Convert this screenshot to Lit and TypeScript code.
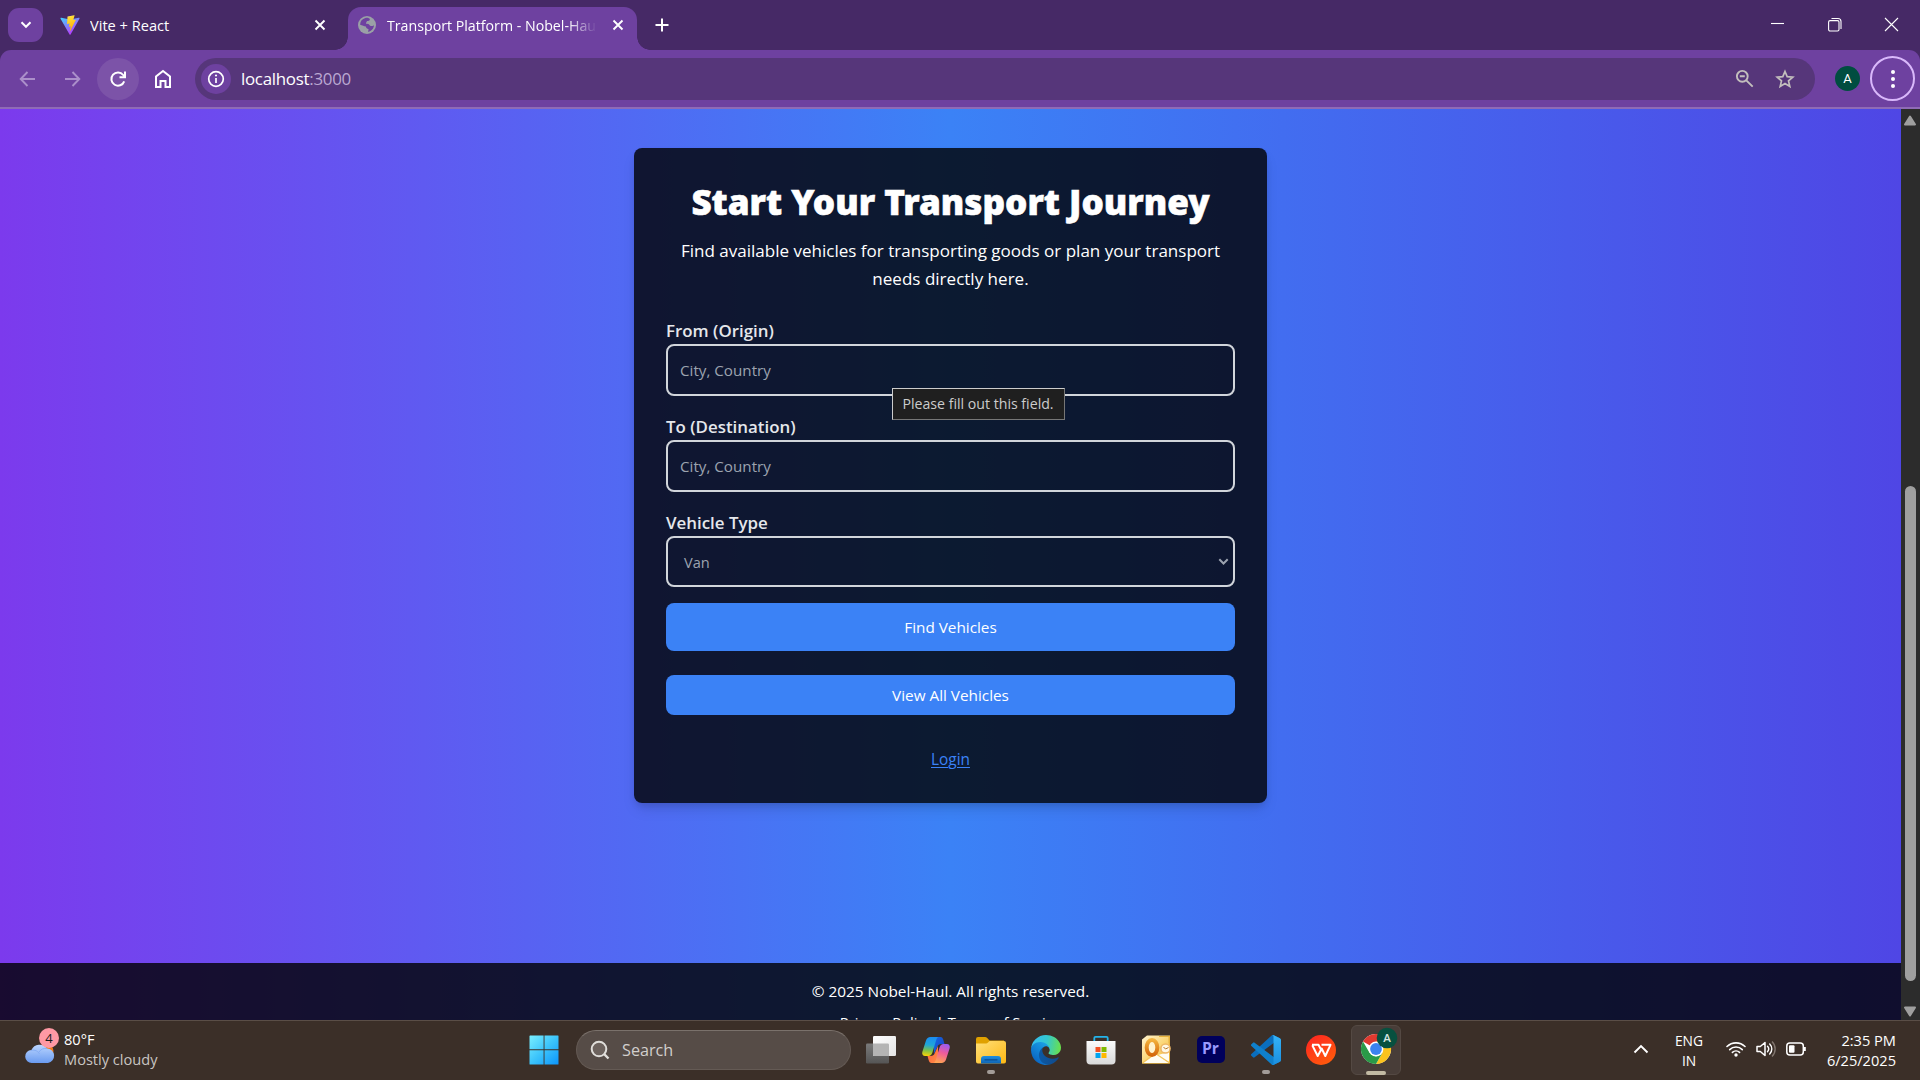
import { LitElement, html, css } from "lit";
import { customElement } from "lit/decorators.js";

const vite = html`<svg width="20" height="20" viewBox="0 0 32 32">
  <defs>
    <linearGradient id="va" x1="0" y1="0" x2=".6" y2="1"><stop offset="0" stop-color="#41d1ff"/><stop offset="1" stop-color="#bd34fe"/></linearGradient>
    <linearGradient id="vb" x1=".4" y1="0" x2=".6" y2="1"><stop offset="0" stop-color="#ffea83"/><stop offset=".1" stop-color="#ffdd35"/><stop offset="1" stop-color="#ffa800"/></linearGradient>
  </defs>
  <path fill="url(#va)" d="M31.1 6 16.9 31.3a.9.9 0 0 1-1.6 0L.9 6C.5 5.200 1.100 4.300 2 4.500L16.100 7l13.900-2.500c.9-.2 1.500.7 1.100 1.500z"/>
  <path fill="url(#vb)" d="M22.700.5 12.300 2.500c-.2 0-.3.2-.3.400l-.7 10.900c0 .3.2.5.500.4l2.900-.7c.3-.1.5.2.5.500l-.9 4.300c-.1.3.2.5.5.4l1.800-.5c.3-.1.6.2.500.5l-1.400 6.700c-.1.400.5.7.7.3l8.900-17.700c.1-.3-.1-.6-.4-.5l-3 .6c-.3 0-.5-.2-.5-.5l1.900-6.600c.1-.3-.1-.6-.6-.5z"/>
</svg>`;

const globe = html`<svg width="20" height="20" viewBox="0 0 20 20">
  <circle cx="10" cy="10" r="9" fill="#9aa0a6"/>
  <path fill="#6e41a0" d="M8.300 3c2.200-.6 4 .1 4.600 1.200-.2 1.500-1.500 1.600-2.900 1.800-.3 1.200-1.300 1.800-1 2.800 1.500.1 2.800.1 3.500 1.200.8 1.300 1.700 1.200 3.200.9l1.300-.6c-.2 3.300-2.600 6-5.700 6.600-.3-.8.2-1.600.3-2.700-1.500-.6-2.600-1.200-2.700-2.800-1.900-.1-3.500-1-5.800-1.700C3.200 6.200 5.200 3.900 8.300 3z"/>
</svg>`;

const tabClose = html`<svg width="12" height="12" viewBox="0 0 12 12"><path d="M1.500 1.500l9 9M10.500 1.500l-9 9" stroke="#fff" stroke-width="1.900"/></svg>`;

const startIcon = html`<svg width="30" height="30" viewBox="0 0 30 30">
  <defs><linearGradient id="ws" gradientUnits="userSpaceOnUse" x1="0" y1="0" x2="30" y2="30"><stop offset="0" stop-color="#7cf1ff"/><stop offset=".5" stop-color="#3cc4fb"/><stop offset="1" stop-color="#0a93fb"/></linearGradient></defs>
  <path fill="url(#ws)" d="M1 .5h13.600v13.700H.5V1zM15.500.5H29a.5.5 0 0 1 .5.5v13.200h-14zM.5 15.300h14.100V29.500H1a.5.500 0 0 1-.5-.5zM15.500 15.300h14V29a.5.500 0 0 1-.5.5H15.500z"/>
</svg>`;

const taskView = html`<svg width="32" height="30" viewBox="0 0 32 30">
  <defs>
    <linearGradient id="ta" x1="0" y1="0" x2="0" y2="1"><stop offset="0" stop-color="#7a7a7a"/><stop offset="1" stop-color="#555"/></linearGradient>
    <linearGradient id="tb" x1="0" y1="0" x2="1" y2="1"><stop offset="0" stop-color="#fff"/><stop offset="1" stop-color="#e4e4e4"/></linearGradient>
  </defs>
  <rect x="1" y="8.500" width="23" height="20" rx="1.200" fill="url(#ta)"/>
  <rect x="8" y="1" width="23" height="20" rx="1.200" fill="url(#tb)"/>
  <path d="M8 8.500h14.800a1.200 1.200 0 0 1 1.200 1.200V21H9.200A1.200 1.200 0 0 1 8 19.800z" fill="#b4b4b4"/>
</svg>`;

const copilot = html`<svg width="30" height="30" viewBox="0 0 30 30">
  <defs>
    <linearGradient id="ca" x1=".3" y1="0" x2=".2" y2="1"><stop offset="0" stop-color="#1b8df0"/><stop offset=".4" stop-color="#1fa6d8"/><stop offset=".7" stop-color="#7dc04a"/><stop offset="1" stop-color="#fcd203"/></linearGradient>
    <linearGradient id="cb" x1=".7" y1="0" x2=".4" y2="1"><stop offset="0" stop-color="#9a5cf2"/><stop offset=".45" stop-color="#ee5a9c"/><stop offset="1" stop-color="#ffa352"/></linearGradient>
    <linearGradient id="cc" x1="0" y1="0" x2="1" y2="1"><stop offset="0" stop-color="#1468e0"/><stop offset="1" stop-color="#1a3fc4"/></linearGradient>
    <linearGradient id="cd" x1="0" y1="0" x2="1" y2="1"><stop offset="0" stop-color="#ff5a36"/><stop offset="1" stop-color="#ff8f4a"/></linearGradient>
  </defs>
  <path fill="url(#cc)" d="M13 2h6.500c1.700 0 2.300 1.200 2.800 2.700L23.500 9h-3.200c-2 0-3.300.8-4 2.700L13 19z"/>
  <path fill="url(#cd)" d="M17 28H10.500c-1.700 0-2.300-1.200-2.800-2.700L6.500 21h3.200c2 0 3.300-.8 4-2.700L17 11z"/>
  <path fill="url(#ca)" d="M9.500 2h8.300c-1.400.3-2.100 1.400-2.600 3l-3.700 12.300c-.7 2.400-2 3.700-4 3.700H4.200C1.800 21 .8 19.200 1.300 17L5 5.500C5.700 3.200 7.300 2 9.500 2z"/>
  <path fill="url(#cb)" d="M20.500 28h-8.300c1.400-.3 2.100-1.400 2.600-3l3.700-12.300c.7-2.400 2-3.700 4-3.700h3.300c2.400 0 3.400 1.800 2.900 4L25 24.500c-.7 2.300-2.300 3.500-4.500 3.500z"/>
</svg>`;

const explorer = html`<svg width="30" height="30" viewBox="0 0 30 30">
  <defs>
    <linearGradient id="ea" x1="0" y1="0" x2="1" y2="1"><stop offset="0" stop-color="#ffe07a"/><stop offset="1" stop-color="#fdb813"/></linearGradient>
    <linearGradient id="eb" x1="0" y1="0" x2="0" y2="1"><stop offset="0" stop-color="#1f8fe0"/><stop offset="1" stop-color="#0f64b4"/></linearGradient>
  </defs>
  <path fill="#e0a100" d="M0 4a2 2 0 0 1 2-2h7c1 0 1.600.3 2.200.9L13.500 5.500H28V12H0z"/>
  <path fill="url(#ea)" d="M0 8.500h9.500c1.200 0 1.800-.3 2.500-1l1-1c.4-.4.900-.5 1.500-.5H28a2 2 0 0 1 2 2V26.500a2 2 0 0 1-2 2H2a2 2 0 0 1-2-2z"/>
  <path fill="url(#eb)" d="M5 28.500V24a3 3 0 0 1 3-3h14a3 3 0 0 1 3 3v4.500z"/>
  <path d="M9 24.800h12" stroke="#0a4d92" stroke-width="1.300" stroke-linecap="round"/>
</svg>`;

const edge = html`<svg width="30" height="30" viewBox="0 0 256 256">
  <defs>
    <linearGradient id="ga" gradientUnits="userSpaceOnUse" x1="60" y1="177" x2="241" y2="177"><stop offset="0" stop-color="#0c59a4"/><stop offset="1" stop-color="#114a8b"/></linearGradient>
    <linearGradient id="gb" gradientUnits="userSpaceOnUse" x1="150" y1="100" x2="40" y2="230"><stop offset="0" stop-color="#1b9de2"/><stop offset=".4" stop-color="#1387d8"/><stop offset="1" stop-color="#0a66c2"/></linearGradient>
    <linearGradient id="gc" gradientUnits="userSpaceOnUse" x1="10" y1="70" x2="250" y2="110"><stop offset="0" stop-color="#33bdf0"/><stop offset=".5" stop-color="#34c7cf"/><stop offset="1" stop-color="#68e04e"/></linearGradient>
  </defs>
  <path fill="url(#ga)" d="M231 190.500a93 93 0 0 1-10.500 4.700 102 102 0 0 1-36 6.500c-47.300 0-88.500-32.500-88.500-74.300a31.500 31.500 0 0 1 16.400-27.300c-42.800 1.800-53.800 46.400-53.800 72.500 0 74 68.100 81.400 82.800 81.400 7.900 0 19.800-2.300 27-4.600l1.300-.4a128 128 0 0 0 66.600-52.800 4 4 0 0 0-5.300-5.700z"/>
  <path fill="url(#gb)" d="M105.700 241.400a79 79 0 0 1-22.700-21.300 80.700 80.700 0 0 1 29.500-120c3.100-1.500 8.500-4.100 15.600-4 10 .1 19.600 4.900 25.700 13a32 32 0 0 1 6.300 18.700c0-.2 24.500-79.600-80-79.600C36.200 48.200.1 89.900.1 126.500a130 130 0 0 0 12.100 56 128 128 0 0 0 156.400 67 75.500 75.500 0 0 1-62.800-8z"/>
  <path fill="url(#gc)" d="M152.300 148.900c-.8 1-3.300 2.500-3.300 5.700 0 2.600 1.700 5.100 4.700 7.200 14.400 10 41.500 8.700 41.600 8.700 10.700 0 21.100-2.900 30.300-8.300A61.400 61.400 0 0 0 256 109.200c.3-22.400-8-37.300-11.300-43.900C223.500 23.900 177.700 0 128 0A128 128 0 0 0 0 126.200c.5-36.500 36.800-66 80-66 3.500 0 23.500.3 42 10 16.300 8.600 24.900 19 30.800 29.200 6.200 10.700 7.300 24.100 7.300 29.500s-2.700 13.300-7.800 20z"/>
</svg>`;

const store = html`<svg width="30" height="30" viewBox="0 0 30 30">
  <defs><linearGradient id="sa" x1="0" y1="0" x2="0" y2="1"><stop offset="0" stop-color="#fbfbfb"/><stop offset="1" stop-color="#d9d9d9"/></linearGradient></defs>
  <path d="M8.300 7V3a1.200 1.200 0 0 1 1.200-1.200h11A1.200 1.200 0 0 1 21.700 3v4" fill="none" stroke="#24b4ea" stroke-width="1.800"/>
  <path fill="url(#sa)" d="M.5 6h29v19.500a4 4 0 0 1-4 4h-21a4 4 0 0 1-4-4z"/>
  <path fill="#f25022" d="M9.500 12h5v5h-5z"/><path fill="#7fba00" d="M15.500 12h5v5h-5z"/><path fill="#00a4ef" d="M9.500 18h5v5h-5z"/><path fill="#ffb900" d="M15.500 18h5v5h-5z"/>
</svg>`;

const outlook = html`<svg width="30" height="30" viewBox="0 0 30 30">
  <defs>
    <linearGradient id="oa" x1="0" y1="0" x2="1" y2="1"><stop offset="0" stop-color="#fff4cf"/><stop offset=".5" stop-color="#fbd779"/><stop offset="1" stop-color="#f0b132"/></linearGradient>
    <linearGradient id="ob" x1="0" y1="0" x2="0" y2="1"><stop offset="0" stop-color="#f3b23c"/><stop offset="1" stop-color="#d4680c"/></linearGradient>
  </defs>
  <path fill="url(#oa)" d="M1 4.500 6 .5h23v28H1z"/>
  <path d="M18 1.500h10v7M28.500 1v27H1.500" fill="none" stroke="#e6b13c" stroke-width="1"/>
  <path fill="#fffdf4" d="M1.500 28 14 19l14.500 9z"/><path fill="#fffdf4" d="M15 20.500 28 17v10z"/>
  <path d="M1.500 28 14.500 18.500 28 27.500" fill="none" stroke="#f2c55e" stroke-width="1.200"/>
  <ellipse cx="11" cy="12.500" rx="5.300" ry="7.600" fill="#fff3cd" stroke="url(#ob)" stroke-width="4"/>
  <circle cx="24.500" cy="13.500" r="4.600" fill="#fff8e6" stroke="#eeb765" stroke-width="1.500"/>
  <path d="M24.500 14l-2-2M24.500 14l3-1.500" stroke="#b87828" stroke-width="1"/>
</svg>`;

const vscode = html`<svg width="30" height="30" viewBox="0 0 100 100">
  <defs><linearGradient id="vs" x1="0" y1="0" x2="0" y2="1"><stop offset="0" stop-color="#35b3f7"/><stop offset="1" stop-color="#1a8fe0"/></linearGradient></defs>
  <path fill="#0a6ebd" d="M96.500 10.600 75.900.7a6.200 6.200 0 0 0-7.100 1.200L1.300 63.100a4.200 4.200 0 0 0 0 6.200l5.500 5a4.200 4.200 0 0 0 5.300.2L93.400 13.200z"/>
  <path fill="#0f80cc" d="M96.500 89.400 75.900 99.300a6.200 6.200 0 0 1-7.100-1.200L1.300 36.900a4.200 4.200 0 0 1 0-6.200l5.500-5a4.200 4.200 0 0 1 5.300-.2L93.400 86.800z"/>
  <path fill="url(#vs)" d="M75.900 99.300a6.200 6.200 0 0 1-7.100-1.200c2.300 2.300 6.200.7 6.200-2.600V4.500c0-3.300-3.900-4.900-6.200-2.600A6.200 6.200 0 0 1 75.900.7l20.600 9.900a6.200 6.200 0 0 1 3.500 5.600v67.600a6.200 6.200 0 0 1-3.500 5.600z"/>
</svg>`;

const wps = html`<svg width="30" height="30" viewBox="0 0 30 30">
  <defs><linearGradient id="wa" x1="0" y1="0" x2=".7" y2="1"><stop offset="0" stop-color="#ff2222"/><stop offset="1" stop-color="#ff5a0c"/></linearGradient></defs>
  <circle cx="15" cy="15" r="15" fill="url(#wa)"/>
  <path d="M6 9.800h6.500l3.300 6.400M15.500 9.800h9L19.300 21 15.700 13.500 11.700 21 6.300 10.200" fill="none" stroke="#fff" stroke-width="2" stroke-linejoin="round"/>
</svg>`;

const chrome = html`<svg width="42" height="42" viewBox="0 0 42 42">
  <circle cx="16" cy="22" r="15" fill="#fff"/>
  <path fill="#e0392f" d="M16 22 3 14.500A15 15 0 0 1 29 14.500z"/>
  <path fill="#fcc31e" d="M16 22V14.500H29A15 15 0 0 1 16 37l6.500-11.300z"/>
  <path fill="#2a9a48" d="M16 37A15 15 0 0 1 3 14.500L9.500 25.700 16 29.500 22.400 25.800z"/>
  <circle cx="16" cy="22" r="7.400" fill="#fff"/><circle cx="16" cy="22" r="5.900" fill="#3b82f0"/>
  <circle cx="27" cy="11" r="10.300" fill="#07503f"/>
  <text x="27" y="15" font-size="11.500" font-weight="600" text-anchor="middle" fill="#d8e4e0">A</text>
</svg>`;

@customElement("browser-chrome")
class BrowserChrome extends LitElement {
  static styles = css`
    :host { display: block; background: #462966; color: #fff; font-family: "Open Sans", sans-serif; }
    svg { display: block; flex: none; }
    .tabs { display: flex; height: 50px; align-items: flex-start; }
    .search-tabs { width: 35px; height: 34px; margin: 8px 0 0 8px; border-radius: 11px; background: #6e41a0; display: grid; place-items: center; }
    .tab { display: flex; align-items: center; height: 43px; margin-top: 7px; font-size: 14.600px; padding-bottom: 7px; box-sizing: border-box; }
    .tab.idle { width: 305px; padding-left: 17px; padding-right: 22px; }
    .tab.active { width: 289px; background: #6e41a0; border-radius: 13px 13px 0 0; padding-left: 9px; padding-right: 13px; font-size: 14.200px; position: relative; }
    .tab.active::before, .tab.active::after { content: ""; position: absolute; bottom: 0; width: 13px; height: 13px; }
    .tab.active::before { left: -13px; background: radial-gradient(circle at 0 0, transparent 12.500px, #6e41a0 13px); }
    .tab.active::after { right: -13px; background: radial-gradient(circle at 100% 0, transparent 12.500px, #6e41a0 13px); }
    .title { flex: 1; margin-left: 10px; white-space: nowrap; overflow: hidden; line-height: 22px; }
    .active .title { margin-left: 10px; margin-right: 15px; padding-top: 1px; -webkit-mask-image: linear-gradient(90deg, #000 86%, transparent 100%); mask-image: linear-gradient(90deg, #000 86%, transparent 100%); }
    .new { margin: 18px 0 0 18px; }
    .win { margin-left: auto; display: flex; gap: 42.500px; padding: 17px 21px 0 0; }
    .bar { display: flex; align-items: center; height: 59px; box-sizing: border-box; padding: 0 5px 0 17px; background: #6e41a0; border-radius: 11px 11px 0 0; border-bottom: 2px solid #8f6bb6; }
    .fwd { margin-left: 25px; }
    .reload { width: 42px; height: 42px; border-radius: 50%; background: #7c53a8; display: grid; place-items: center; margin-left: 15px; }
    .home { margin-left: 15px; }
    .url { flex: 1; height: 42px; border-radius: 21px; background: #56367a; margin-left: 23px; display: flex; align-items: center; padding: 0 20px 0 6px; }
    .info { width: 30px; height: 30px; border-radius: 50%; background: #6e41a0; display: grid; place-items: center; }
    .addr { flex: 1; margin-left: 10px; font-size: 16.900px; letter-spacing: -.280px; line-height: 24px; padding-top: 1px; }
    .addr span { color: #bba8d2; }
    .star { margin-left: 21px; }
    .avatar { width: 25px; height: 25px; border-radius: 50%; background: #004d40; margin-left: 20px; font-size: 13px; line-height: 25px; text-align: center; font-family: Roboto, sans-serif; }
    .menu { width: 45px; height: 45px; box-sizing: border-box; border: 2.500px solid #d9b8fb; border-radius: 50%; margin-left: 10px; display: grid; place-items: center; }
  `;
  render() {
    return html`
      <div class="tabs">
        <div class="search-tabs"><svg width="12" height="8" viewBox="0 0 12 8"><path d="M1.500 1.200 6 5.800l4.500-4.600" fill="none" stroke="#fff" stroke-width="2"/></svg></div>
        <div class="tab idle">${vite}<div class="title">Vite + React</div>${tabClose}</div>
        <div class="tab active">${globe}<div class="title">Transport Platform - Nobel-Haul</div>${tabClose}</div>
        <svg class="new" width="14" height="14" viewBox="0 0 14 14"><path d="M7 .5v13M.5 7h13" stroke="#fff" stroke-width="2"/></svg>
        <div class="win">
          <svg width="15" height="15" viewBox="0 0 15 15"><path d="M1 6.500h13" stroke="#fff" stroke-width="1.100"/></svg>
          <svg width="14" height="15" viewBox="0 0 14 15"><path d="M3.500 1.500H10A3 3 0 0 1 13 4.500V12" fill="none" stroke="#fff" stroke-width="1.100"/><rect x=".6" y="3.600" width="10.400" height="10.400" rx="1.500" fill="none" stroke="#fff" stroke-width="1.100"/></svg>
          <svg width="15" height="15" viewBox="0 0 15 15"><path d="M1 1l13 13M14 1 1 14" stroke="#fff" stroke-width="1.100"/></svg>
        </div>
      </div>
      <div class="bar">
        <svg width="20" height="18" viewBox="0 0 20 18"><path d="M18 9H4.500M10.500 2 3.700 9l6.800 7" fill="none" stroke="#ab8fca" stroke-width="1.900"/></svg>
        <svg class="fwd" width="20" height="18" viewBox="0 0 20 18"><path d="M3 9h13.500M10.500 2l6.800 7-6.800 7" fill="none" stroke="#ab8fca" stroke-width="1.900"/></svg>
        <div class="reload"><svg width="18" height="18" viewBox="0 0 18 18"><path d="M15.200 11.300A6.600 6.600 0 1 1 14.200 5l1.400 1.800" fill="none" stroke="#fff" stroke-width="2"/><path d="M10.500 7.200H16V1.600" fill="none" stroke="#fff" stroke-width="2"/></svg></div>
        <svg class="home" width="18" height="20" viewBox="0 0 18 20"><path d="M2 18V7.500L9 2l7 5.500V18h-4.500v-6h-5v6z" fill="none" stroke="#fff" stroke-width="2"/></svg>
        <div class="url">
          <div class="info"><svg width="18" height="18" viewBox="0 0 18 18"><circle cx="9" cy="9" r="7.300" fill="none" stroke="#fff" stroke-width="1.700"/><path d="M9 8v5" stroke="#fff" stroke-width="1.700"/><circle cx="9" cy="5.500" r="1.100" fill="#fff"/></svg></div>
          <div class="addr">localhost<span>:3000</span></div>
          <svg width="19" height="19" viewBox="0 0 19 19"><circle cx="7.300" cy="7.300" r="5.400" fill="none" stroke="#c3bfbd" stroke-width="1.900"/><path d="M4.800 7.300h5M11.300 11.300l6.400 6.400" stroke="#c3bfbd" stroke-width="1.900"/></svg>
          <svg class="star" width="20" height="20" viewBox="0 0 20 20"><path d="M10 2.500 12.200 7.700 17.800 8.200 13.500 11.900 14.800 17.400 10 14.500 5.200 17.400 6.500 11.900 2.200 8.200 7.800 7.700z" fill="none" stroke="#c3bfbd" stroke-width="1.700"/></svg>
        </div>
        <div class="avatar">A</div>
        <div class="menu"><svg width="6" height="20" viewBox="0 0 6 20"><g fill="#fff"><circle cx="3" cy="3" r="2"/><circle cx="3" cy="10" r="2"/><circle cx="3" cy="17" r="2"/></g></svg></div>
      </div>`;
  }
}

@customElement("transport-page")
class TransportPage extends LitElement {
  static styles = css`
    :host { display: flex; height: 911px; overflow: hidden; color: #fff; font-family: "Open Sans", sans-serif; }
    .page { flex: 1; display: flex; flex-direction: column; align-items: center; background: linear-gradient(90deg, #7c3aed, #3b82f6 50%, #4f46e5); }
    .card { width: 633px; height: 655px; box-sizing: border-box; margin: 39px 0 160px; padding: 33px 32px 0; background: rgba(0, 0, 0, .8); border-radius: 8px; box-shadow: 0 4px 6px -1px rgba(0, 0, 0, .1), 0 8px 15px -3px rgba(0, 0, 0, .12); flex: none; }
    h1 { margin: 0; font: 900 35.100px/41px "Noto Sans", sans-serif; height: 40px; text-align: center; white-space: nowrap; -webkit-text-stroke: .6px #fff; }
    .lead { margin: 16px 0 23px; font-size: 17.050px; line-height: 28px; text-align: center; }
    .field { position: relative; margin-bottom: 16px; }
    label { display: block; font-size: 16.900px; font-weight: 600; line-height: 30px; height: 28px; color: #e5e7eb; }
    .input { height: 52px; box-sizing: border-box; border: 2px solid #d1d5db; border-radius: 8px; padding: 0 12px; font-size: 15.200px; line-height: 49px; color: #9ca3af; }
    .select { height: 51px; display: flex; align-items: center; justify-content: space-between; padding: 0 4px 0 16px; font-size: 14.600px; line-height: 48px; }
    .btn { height: 48px; border-radius: 8px; background: #3b82f6; text-align: center; font-size: 15.300px; line-height: 49px; }
    .all { height: 40px; margin-top: 24px; line-height: 40px; }
    .login { display: block; text-align: center; margin-top: 33px; font-size: 15.400px; line-height: 24px; color: #3b82f6; text-decoration: underline; text-underline-offset: 2px; text-decoration-thickness: 1px; }
    .tip { position: absolute; left: 226px; top: 72px; width: 173px; height: 32px; box-sizing: border-box; border: 1px solid #767676; border-top-color: #ccc; border-left-color: #ccc; background: #1f1f1f; color: #ccc; font-size: 14.150px; line-height: 29px; padding-right: 1px; text-align: center; z-index: 1; }
    .footer { align-self: stretch; flex: 1; background: rgba(0, 0, 0, .8); padding-top: 16px; text-align: center; font-size: 15.350px; line-height: 24px; }
    .links { margin-top: 8px; font-size: 14.750px; line-height: 23px; }
    .scroll { width: 19px; background: #2c2c2c; display: flex; flex-direction: column; align-items: center; box-sizing: border-box; padding: 6px 1px 3px 0; }
    .thumb { width: 11px; height: 495px; border-radius: 6px; background: #9f9f9f; margin: 360px 0 auto; }
  `;
  private field(label: string, tip = "") {
    return html`<div class="field"><label>${label}</label><div class="input">City, Country</div>${tip ? html`<div class="tip">${tip}</div>` : ""}</div>`;
  }
  render() {
    return html`
      <div class="page">
        <div class="card">
          <h1>Start Your Transport Journey</h1>
          <div class="lead">Find available vehicles for transporting goods or plan your transport needs directly here.</div>
          ${this.field("From (Origin)", "Please fill out this field.")}
          ${this.field("To (Destination)")}
          <div class="field"><label>Vehicle Type</label>
            <div class="input select">Van<svg width="11" height="8" viewBox="0 0 11 8"><path d="M1.300 1.300 5.500 5.500l4.200-4.200" fill="none" stroke="#9ca3af" stroke-width="2"/></svg></div>
          </div>
          <div class="btn">Find Vehicles</div>
          <div class="btn all">View All Vehicles</div>
          <a class="login">Login</a>
        </div>
        <div class="footer">
          <div>© 2025 Nobel-Haul. All rights reserved.</div>
          <div class="links">Privacy Policy | Terms of Service</div>
        </div>
      </div>
      <div class="scroll">
        <svg width="14" height="11" viewBox="0 0 14 11"><path d="M7 1.500 12 9.500H2z" fill="#9f9f9f" stroke="#9f9f9f" stroke-width="2" stroke-linejoin="round"/></svg>
        <div class="thumb"></div>
        <svg width="14" height="11" viewBox="0 0 14 11"><path d="M7 9.500 2 1.500H12z" fill="#9f9f9f" stroke="#9f9f9f" stroke-width="2" stroke-linejoin="round"/></svg>
      </div>`;
  }
}

@customElement("task-bar")
class TaskBar extends LitElement {
  static styles = css`
    :host { display: flex; height: 60px; box-sizing: border-box; border-top: 1px solid #5a4e47; background: #3b2f28; color: #fff; font-family: "Open Sans", sans-serif; }
    svg { display: block; flex: none; }
    .weather { width: 516px; display: flex; box-sizing: border-box; padding: 6px 0 0 24px; }
    .weather .t { margin-left: 4px; font-size: 14.600px; line-height: 20px; padding-top: 2px; }
    .t .d { color: #c9c5c2; }
    .apps { display: flex; }
    .app { width: 55px; height: 59px; box-sizing: border-box; padding-top: 14px; display: grid; justify-items: center; align-content: start; }
    .search { width: 275px; height: 40px; box-sizing: border-box; margin: 9px 2px 0 5px; border-radius: 20px; background: #564c47; border: 1px solid #645a54; border-top-color: #7a716b; display: flex; align-items: center; padding-left: 13px; font-size: 16.200px; color: #d2cfcd; }
    .search span { margin-left: 12px; line-height: 24px; }
    .dot { width: 8px; height: 4px; border-radius: 2px; background: #a39c98; margin-top: 5px; }
    .pr { width: 28px; height: 27px; margin-top: 1px; border-radius: 5px; background: #00005b; color: #9999ff; font: 700 15.700px/25px "Open Sans", sans-serif; text-align: center; }
    .tile { width: 50px; height: 50px; box-sizing: border-box; border-radius: 6px; background: #483d38; border: 1px solid #544943; margin: 4px 0 0 3px; padding: 1px 0 0 8px; }
    .tile .dot { width: 20px; background: #c2baa3; margin: 2px 0 0 6px; }
    .tray { margin-left: auto; display: flex; padding-right: 24px; font-size: 14.600px; line-height: 20px; }
    .lang { width: 50px; text-align: center; padding-top: 10px; margin-left: 15px; font-size: 13.800px; line-height: 20px; }
    .clock { text-align: right; padding-top: 9px; width: 70px; margin-left: 20px; }
    .tray svg.up { margin-top: 23px; }
    .tray .ic { display: flex; gap: 10px; padding-top: 18px; margin-left: 12px; }
  `;
  render() {
    return html`
      <div class="weather">
        <svg width="36" height="42" viewBox="0 0 36 42">
          <defs><linearGradient id="cl" x1="0" y1="0" x2="0" y2="1"><stop offset="0" stop-color="#bcd6ff"/><stop offset="1" stop-color="#6a9bf0"/></linearGradient></defs>
          <circle cx="22" cy="24" r="7.500" fill="#f07a1e"/>
          <path d="M8 36a6.500 6.500 0 0 1-.6-13A9 9 0 0 1 23 21.500 7.300 7.300 0 0 1 24 36z" fill="url(#cl)"/>
          <path d="M7 23.500c4-1 7 .5 8.500 3.500M15 25c2-3 5-4 8-3.500" fill="none" stroke="#86aef5" stroke-width="1"/>
          <circle cx="25" cy="11" r="10" fill="#ff99a4"/>
          <text x="25" y="15.500" font-size="13" text-anchor="middle" fill="#1a1a1a">4</text>
        </svg>
        <div class="t"><div>80°F</div><div class="d">Mostly cloudy</div></div>
      </div>
      <div class="apps">
        <div class="app">${startIcon}</div>
        <div class="search"><svg width="20" height="20" viewBox="0 0 20 20"><circle cx="9" cy="9" r="7.300" fill="#6c625d" stroke="#e0deda" stroke-width="2"/><path d="M14.200 14.200 18.500 18.500" stroke="#e0deda" stroke-width="2.400"/></svg><span>Search</span></div>
        <div class="app">${taskView}</div>
        <div class="app">${copilot}</div>
        <div class="app">${explorer}<div class="dot"></div></div>
        <div class="app">${edge}</div>
        <div class="app">${store}</div>
        <div class="app">${outlook}</div>
        <div class="app"><div class="pr">Pr</div></div>
        <div class="app">${vscode}<div class="dot"></div></div>
        <div class="app">${wps}</div>
        <div class="tile">${chrome}<div class="dot"></div></div>
      </div>
      <div class="tray">
        <svg class="up" width="16" height="10" viewBox="0 0 16 10"><path d="M1.500 8.500 8 2l6.500 6.500" fill="none" stroke="#fff" stroke-width="1.900"/></svg>
        <div class="lang">ENG<br>IN</div>
        <div class="ic">
          <svg width="20" height="20" viewBox="0 0 20 20"><g fill="none" stroke="#fff" stroke-width="1.600" stroke-linecap="round"><path d="M1 7.500a13 13 0 0 1 18 0"/><path d="M3.700 10.600a9 9 0 0 1 12.600 0"/><path d="M6.400 13.400a5.200 5.200 0 0 1 7.200 0"/></g><circle cx="10" cy="16" r="1.700" fill="#fff"/></svg>
          <svg width="20" height="20" viewBox="0 0 20 20"><path d="M1 7.500h3.300L9 3.500v13l-4.700-4H1z" fill="none" stroke="#fff" stroke-width="1.500" stroke-linejoin="round"/><path d="M11.500 7.300a4 4 0 0 1 0 5.400M13.700 5a7 7 0 0 1 0 10" fill="none" stroke="#fff" stroke-width="1.400" stroke-linecap="round"/><path d="M16 2.500a10.500 10.500 0 0 1 0 15" fill="none" stroke="#81766f" stroke-width="1.400"/></svg>
          <svg width="20" height="20" viewBox="0 0 20 20"><rect x=".8" y="4" width="16.500" height="12" rx="3" fill="none" stroke="#fff" stroke-width="1.500"/><rect x="3" y="6.200" width="5.500" height="7.600" rx="1" fill="#fff"/><path d="M18.800 8v4" stroke="#fff" stroke-width="2"/></svg>
        </div>
        <div class="clock">2:35 PM<br>6/25/2025</div>
      </div>`;
  }
}

@customElement("app-root")
class AppRoot extends LitElement {
  static styles = css`:host { display: block; width: 1920px; height: 1080px; overflow: hidden; }`;
  render() {
    return html`<browser-chrome></browser-chrome><transport-page></transport-page><task-bar></task-bar>`;
  }
}
